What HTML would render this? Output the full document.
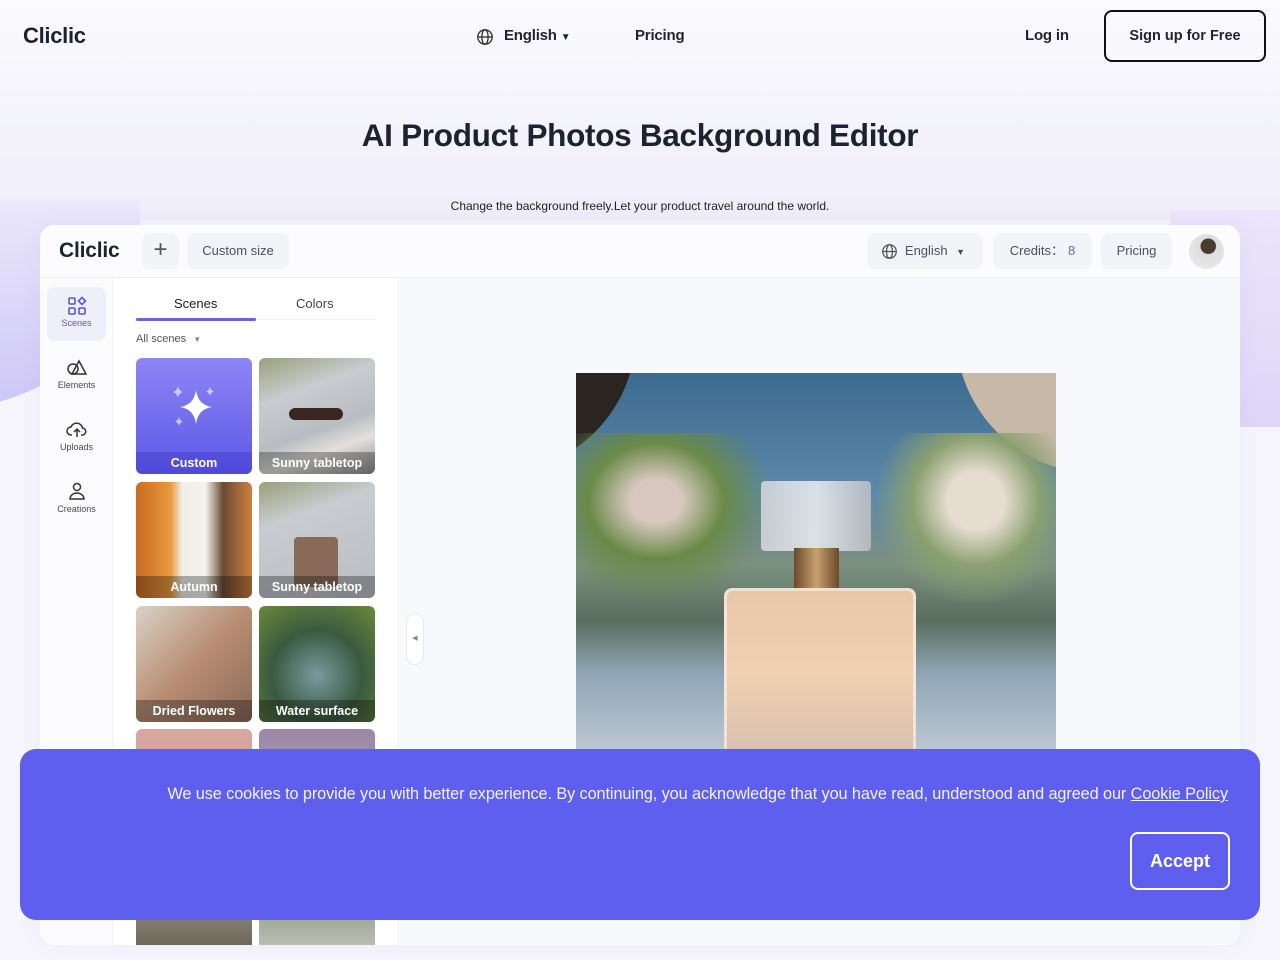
<!DOCTYPE html>
<html><head><meta charset="utf-8"><style>
*{box-sizing:border-box;margin:0;padding:0}
body{width:1280px;height:960px;overflow:hidden;font-family:"Liberation Sans",sans-serif;background:#f6f5fb;position:relative;color:#1f2430}
.bgblob{position:absolute;left:-260px;top:200px;width:400px;height:210px;border-radius:0 0 200px 200px/0 0 180px 180px;background:linear-gradient(180deg,#ebe8fb,#cdc6f6)}
.bgright{position:absolute;left:1170px;top:210px;width:110px;height:217px;background:linear-gradient(180deg,#ebe6fb,#ddd6f8)}
.top{position:absolute;left:0;top:0;width:1280px;height:220px;background:linear-gradient(180deg,#fbfbfe 0%,#f4f3fb 60%,#efedf9 100%)}
.nav{position:absolute;top:0;left:0;width:1280px;height:72px}
.logo{position:absolute;left:23px;top:23px;font-size:22px;font-weight:600;letter-spacing:-.3px;color:#1d2230}
.navtxt{position:absolute;top:27px;font-size:15px;font-weight:bold;color:#1f2430;letter-spacing:-.2px}
.signup{position:absolute;left:1104px;top:10px;width:162px;height:52px;border:2px solid #111;border-radius:8px;font-size:14.5px;font-weight:bold;text-align:center;line-height:48px}
h1{position:absolute;left:0;width:1280px;top:117px;text-align:center;font-size:31.5px;font-weight:bold;color:#1d2230;letter-spacing:-.3px}
.sub{position:absolute;left:0;width:1280px;top:199px;text-align:center;font-size:12px;color:#222}
.app{position:absolute;left:40px;top:225px;width:1200px;height:720px;background:#fff;border-radius:14px;box-shadow:0 0 20px rgba(120,110,200,.08);overflow:hidden}
.ahead{height:53px;border-bottom:1px solid #eef0f4;position:relative;background:#fcfcfe}
.alogo{position:absolute;left:19px;top:14px;font-size:21px;font-weight:600;letter-spacing:-.2px;color:#1d2230}
.pill{position:absolute;top:8px;height:36px;background:#f3f4f7;border-radius:8px;font-size:13px;color:#4a5060;line-height:36px;text-align:center}
.side{position:absolute;left:0;top:54px;width:73px;height:670px;border-right:1px solid #eef0f4;background:#fbfbfd}
.si{position:absolute;left:7px;width:59px;height:54px;text-align:center;font-size:9px;color:#444a58;border-radius:8px}
.si svg{display:block;margin:9px auto 2px}
.panel{position:absolute;left:74px;top:54px;width:285px;height:670px;border-right:1px solid #eef0f4;background:#fff}
.tab{position:absolute;top:17px;font-size:13px;color:#333}
.thumb{position:absolute;width:116px;height:116px;border-radius:6px;overflow:hidden}
.thumb span{position:absolute;left:0;bottom:0;width:100%;height:22px;background:rgba(0,0,0,.3);color:#fff;font-size:12.5px;font-weight:bold;text-align:center;line-height:22px}
.canvas{position:absolute;left:360px;top:54px;width:840px;height:670px;background:#f8f9fc}
.photo{position:absolute;left:576px;top:373px;width:480px;height:400px;overflow:hidden;background:linear-gradient(180deg,#3c6a8f 0%,#5d88aa 30%,#7c9080 48%,#5a6e5e 62%,#8fa5b6 75%,#c9d2d8 100%)}
.cookie{position:absolute;left:20px;top:749px;width:1240px;height:171px;background:#5f5fef;border-radius:16px;color:#fff}
.cookie p{position:absolute;right:32px;top:36px;font-size:16.3px;color:#f2f2ff;letter-spacing:-.1px}
.accept{position:absolute;left:1110px;top:83px;width:100px;height:58px;border:2px solid #fff;border-radius:8px;font-size:18px;font-weight:bold;text-align:center;line-height:54px}
</style></head><body>
<div class="top"></div>
<div class="bgblob"></div>
<div class="bgright"></div>
<div class="nav">
 <div class="logo">Cliclic</div>
 <svg style="position:absolute;left:476px;top:28px" width="18" height="18" viewBox="0 0 20 20" fill="none" stroke="#333" stroke-width="1.5"><circle cx="10" cy="10" r="8"/><ellipse cx="10" cy="10" rx="3.5" ry="8"/><path d="M2 10h16"/></svg>
 <div class="navtxt" style="left:504px">English <span style="font-size:10px">▼</span></div>
 <div class="navtxt" style="left:635px">Pricing</div>
 <div class="navtxt" style="left:1025px">Log in</div>
 <div class="signup">Sign up for Free</div>
</div>
<h1>AI Product Photos Background Editor</h1>
<div class="sub">Change the background freely.Let your product travel around the world.</div>
<div class="app">
 <div class="ahead">
  <div class="alogo">Cliclic</div>
  <div class="pill" style="left:102px;width:37px;font-size:24px;color:#555;line-height:34px">+</div>
  <div class="pill" style="left:147px;width:102px">Custom size</div>
  <div class="pill" style="left:827px;width:116px;padding-left:20px">English <span style="font-size:9px;margin-left:5px">▼</span>
   <svg style="position:absolute;left:14px;top:10px" width="17" height="17" viewBox="0 0 20 20" fill="none" stroke="#555" stroke-width="1.5"><circle cx="10" cy="10" r="8"/><ellipse cx="10" cy="10" rx="3.5" ry="8"/><path d="M2 10h16"/></svg></div>
  <div class="pill" style="left:953px;width:99px">Credits：<span style="color:#6a5fe0;margin-left:4px">8</span></div>
  <div class="pill" style="left:1061px;width:71px">Pricing</div>
  <div style="position:absolute;left:1149px;top:9px;width:35px;height:35px;border-radius:50%;background:radial-gradient(circle at 55% 35%,#4a3a30 0 25%,#ddd 27%,#eee)"></div>
 </div>
 <div class="side">
  <div class="si" style="top:8px;background:#eeeff8;color:#5a55d8">
   <svg width="20" height="20" viewBox="0 0 20 20" fill="none" stroke="#5a55d8" stroke-width="1.6"><rect x="2" y="2" width="6" height="6" rx="1"/><rect x="2" y="12" width="6" height="6" rx="1"/><rect x="12" y="12" width="6" height="6" rx="1"/><path d="M15 1.5l3.5 3.5-3.5 3.5-3.5-3.5z"/></svg>Scenes</div>
  <div class="si" style="top:70px"><svg width="22" height="20" viewBox="0 0 22 20" fill="none" stroke="#333" stroke-width="1.5"><circle cx="7" cy="11" r="5"/><path d="M13 3l7 13H6z"/></svg>Elements</div>
  <div class="si" style="top:132px"><svg width="22" height="20" viewBox="0 0 22 20" fill="none" stroke="#333" stroke-width="1.5"><path d="M6 15H5a4 4 0 010-8 6 6 0 0111.5 1A3.5 3.5 0 0116 15h-1M11 17V9M8 12l3-3 3 3"/></svg>Uploads</div>
  <div class="si" style="top:194px"><svg width="22" height="20" viewBox="0 0 22 20" fill="none" stroke="#333" stroke-width="1.5"><circle cx="11" cy="5" r="3.5"/><path d="M4 17a7 6 0 0114 0z"/></svg>Creations</div>
 </div>
 <div class="panel">
  <div class="tab" style="left:60px;font-weight:500;color:#222">Scenes</div>
  <div class="tab" style="left:182px;color:#444">Colors</div>
  <div style="position:absolute;left:22px;top:40px;width:240px;height:1px;background:#eef0f4"></div>
  <div style="position:absolute;left:22px;top:39px;width:120px;height:3px;background:#6a64e0;border-radius:2px"></div>
  <div style="position:absolute;left:22px;top:54px;font-size:11px;color:#555">All scenes <span style="font-size:8px;color:#888;margin-left:4px">▼</span></div>
  <div class="thumb" style="left:22px;top:79px;background:linear-gradient(180deg,#8d86f5,#5d57e6)">
   <svg style="position:absolute;left:34px;top:24px" width="50" height="50" viewBox="0 0 50 50" fill="#fff"><path d="M26 8q2 15 16 17q-14 2-16 17q-2-15-16-17q14-2 16-17z"/><path opacity=".6" d="M8 4q1 5 5 6q-4 1-5 6q-1-5-5-6q4-1 5-6zM40 5q.8 3.5 4 4.5q-3.2 1-4 4.5q-.8-3.5-4-4.5q3.2-1 4-4.5zM9 35q.8 3.5 4 4.5q-3.2 1-4 4.5q-.8-3.5-4-4.5q3.2-1 4-4.5z"/></svg>
   <span style="background:rgba(60,55,200,.4)">Custom</span></div>
  <div class="thumb" style="left:145px;top:79px;background:linear-gradient(160deg,#9aa07a 0%,#c8ccd0 30%,#b9bdc2 60%,#e3e0dc 75%,#8d8f92 100%)">
   <div style="position:absolute;left:30px;top:50px;width:54px;height:12px;background:#3a2620;border-radius:6px"></div><span>Sunny tabletop</span></div>
  <div class="thumb" style="left:22px;top:203px;background:linear-gradient(90deg,#c96a20,#e89a40 30%,#f0f0ea 40%,#f2f1ec 60%,#6a4a34 75%,#d08040)"><span>Autumn</span></div>
  <div class="thumb" style="left:145px;top:203px;background:linear-gradient(160deg,#9aa07a 0%,#c8ccd0 30%,#b9bdc2 100%)"><div style="position:absolute;left:35px;top:55px;width:44px;height:50px;background:#8a6a58;border-radius:4px"></div><span>Sunny tabletop</span></div>
  <div class="thumb" style="left:22px;top:327px;background:linear-gradient(135deg,#d9d2c8,#b88d72 50%,#8a6a58)"><span>Dried Flowers</span></div>
  <div class="thumb" style="left:145px;top:327px;background:radial-gradient(circle at 50% 60%,#7a9aa0,#3a5a40 50%,#6a8a3a)"><span>Water surface</span></div>
  <div class="thumb" style="left:22px;top:450px;background:linear-gradient(180deg,#d8a8a0,#c89890)"></div>
  <div class="thumb" style="left:145px;top:450px;background:linear-gradient(180deg,#9a88a8,#c0a0b0)"></div>
  <div class="thumb" style="left:22px;top:574px;height:96px;border-radius:0;background:linear-gradient(180deg,#bdb5a5,#6a6458)"></div>
  <div class="thumb" style="left:145px;top:574px;height:96px;border-radius:0;background:linear-gradient(180deg,#5a7a50,#c0c0b8)"></div>
 </div>
 <div class="canvas"><div style="position:absolute;left:6px;top:334px;width:18px;height:52px;border:1px solid #e6e8ee;border-radius:9px;background:#fff;font-size:7px;color:#888;text-align:center;line-height:50px">◀</div></div>
</div>
<div class="photo">
 <div style="position:absolute;left:-80px;top:-40px;width:140px;height:140px;background:#2a2520;border-radius:0 0 100% 0"></div>
 <div style="position:absolute;left:380px;top:-40px;width:140px;height:140px;background:#c8b8a8;border-radius:0 0 0 100%"></div>
 <div style="position:absolute;left:0;top:60px;width:200px;height:170px;background:radial-gradient(ellipse at 40% 40%,#d8c8c0 0 15%,#6a8a48 40%,transparent 70%)"></div>
 <div style="position:absolute;left:300px;top:60px;width:200px;height:170px;background:radial-gradient(ellipse at 50% 40%,#e6dcd0 0 20%,#8aa070 45%,transparent 72%)"></div>
 <div style="position:absolute;left:185px;top:108px;width:110px;height:70px;background:linear-gradient(90deg,#cfd3d8,#e8eaee,#b8bcc2);border-radius:4px;opacity:.9"></div>
 <div style="position:absolute;left:218px;top:175px;width:45px;height:45px;background:linear-gradient(90deg,#6a4a2a,#c8a070,#6a4a2a)"></div>
 <div style="position:absolute;left:148px;top:215px;width:192px;height:170px;background:linear-gradient(180deg,#e8c8a8,#f0d0b0 50%,#d8c0b0);border-radius:8px;border:3px solid rgba(255,255,255,.5)"></div>
</div>
<div class="cookie">
 <p>We use cookies to provide you with better experience. By continuing, you acknowledge that you have read, understood and agreed our <u>Cookie Policy</u></p>
 <div class="accept">Accept</div>
</div>
</body></html>
